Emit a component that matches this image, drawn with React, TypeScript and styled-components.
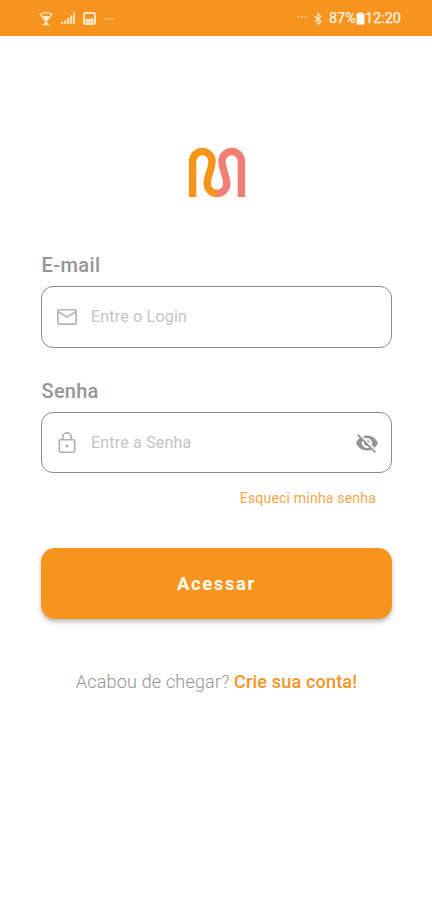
import React from "react";
import styled, { createGlobalStyle } from "styled-components";

const ORANGE = "#f7941e";

const GlobalStyle = createGlobalStyle`
  * { box-sizing: border-box; }
  body { margin: 0; background: #fefefe; font-family: Roboto, "Liberation Sans", sans-serif; }
`;

const Screen = styled.div`
  display: flex;
  flex-direction: column;
  width: 432px;
  height: 900px;
  overflow: hidden;
  background: #fefefe;
`;

const StatusBar = styled.header`
  display: flex;
  justify-content: space-between;
  align-items: center;
  height: 36px;
  flex: none;
  padding: 1px 31px 0 39px;
  background: ${ORANGE};
  color: #ffe9c9;
`;

const StatusGroup = styled.div<{ $gap: number }>`
  display: flex;
  align-items: center;
  gap: ${(p) => p.$gap}px;
`;

const StatusText = styled.span`
  padding-top: 1px;
  font-size: 14.5px;
  line-height: 18px;
  font-weight: 400;
  color: #fff3e0;
  -webkit-text-stroke: 0.25px #fff3e0;
`;

const Clock = styled.div`
  display: flex;
  align-items: center;
`;

const Logo = styled.svg`
  display: block;
  margin: 111px 0 0 188px;
  flex: none;
`;

const Form = styled.form`
  display: flex;
  flex-direction: column;
  width: 351px;
  margin: 55px 0 0 41px;
`;

const Label = styled.label<{ $top?: number; $spacing: number }>`
  margin-top: ${(p) => p.$top ?? 0}px;
  padding-left: 0.6px;
  height: 33px;
  line-height: 24px;
  font-size: 20px;
  font-weight: 500;
  letter-spacing: ${(p) => p.$spacing}px;
  color: #959595;
`;

const Field = styled.div<{ $height: number }>`
  display: flex;
  align-items: center;
  height: ${(p) => p.$height}px;
  padding: 0 12px 0 13px;
  border: 1px solid #8a8a8a;
  border-radius: 12px;
`;

const Input = styled.input<{ $spacing: number }>`
  flex: 1;
  min-width: 0;
  margin-left: 12px;
  padding: 0;
  border: 0;
  outline: 0;
  background: none;
  font: 400 16px/22px Roboto, "Liberation Sans", sans-serif;
  letter-spacing: ${(p) => p.$spacing}px;
  color: #777;
  &::placeholder { color: #c4c4c4; opacity: 1; }
`;

const Forgot = styled.a`
  align-self: flex-end;
  margin: 15px 16px 0 0;
  font-size: 14px;
  line-height: 20px;
  letter-spacing: 0.2px;
  color: #f3a64c;
`;

const Submit = styled.button`
  height: 71px;
  margin-top: 40px;
  padding: 1px 0 0;
  border: 0;
  border-radius: 14px;
  background: ${ORANGE};
  box-shadow: 0 3px 4px rgba(0, 0, 0, 0.26);
  color: #fffaf0;
  font: 700 18.5px/24px Roboto, "Liberation Sans", sans-serif;
  letter-spacing: 1.6px;
`;

const SignUp = styled.p`
  margin: 51px 0 0;
  text-align: center;
  white-space: nowrap;
  font-size: 18px;
  line-height: 24px;
  font-weight: 300;
  letter-spacing: 0.18px;
  color: #949494;
`;

const SignUpLink = styled.a`
  font-weight: 500;
  color: ${ORANGE};
`;

const WifiIcon = () => (
  <svg width="14" height="14" viewBox="0 0 14 14" fill="none" stroke="currentColor">
    <path d="M1.2 2.2Q7-.8 12.8 2.2L8.2 8.2H5.8Z" strokeWidth="1.3" />
    <path d="M3.6 4.6Q7 3 10.4 4.6L7 9Z" fill="currentColor" stroke="none" />
    <path d="M7 8v4" strokeWidth="1.6" />
    <path d="M3 13.2 7 9.6l4 3.6z" fill="currentColor" stroke="none" />
  </svg>
);

const SignalIcon = () => (
  <svg width="14" height="13" viewBox="0 0 14 13" fill="currentColor" opacity=".85">
    <path d="M0 10h2.3v2H0zM3 8.5h2.3V12H3zM6 6h2.3v6H6zM9 3.5h2.3V12H9zM12 .5h2V12h-2z" />
  </svg>
);

const PictureIcon = () => (
  <svg width="13" height="13" viewBox="0 0 13 13">
    <rect x="1" y="1" width="11" height="11" rx="1.5" fill="none" stroke="currentColor" strokeWidth="1.9" />
    <path d="M2.5 10.5V7.8l2-1.6 2 1.4L8.8 5.6l1.8 2.2v2.7z" fill="currentColor" />
  </svg>
);

const DotsIcon = () => (
  <svg width="10" height="4" viewBox="0 0 10 4" fill="currentColor" opacity=".65">
    <path d="M.5 1h2v1.6h-2zM4 1h2v1.6H4zM7.5 1h2v1.6h-2z" />
  </svg>
);

const TopDots = styled.div`
  display: flex;
  padding-bottom: 4px;
`;

const BluetoothIcon = () => (
  <svg width="10" height="14" viewBox="0 0 10 14" fill="none" stroke="currentColor" strokeWidth="1.2">
    <path d="M1.5 4 8 9.5 5 12.5v-11l3 3L1.5 10" />
  </svg>
);

const BatteryIcon = () => (
  <svg width="9" height="13" viewBox="0 0 9 13" fill="#fff">
    <path d="M3 .5h3V1.5h2.4v11H.6v-11H3z" />
  </svg>
);

const MailIcon = () => (
  <svg width="24" height="24" viewBox="0 0 24 24" fill="#b5b5b5">
    <path d="M22 6c0-1.1-.9-2-2-2H4c-1.1 0-2 .9-2 2v12c0 1.1.9 2 2 2h16c1.1 0 2-.9 2-2V6zm-1.7 0L12 11.2 3.7 6v-.4h16.6zm0 12.3H3.7V8L12 13l8.3-5z" />
  </svg>
);

const LockIcon = () => (
  <svg width="24" height="24" viewBox="0 0 24 24" fill="none" stroke="#b0b0b0" strokeWidth="1.6">
    <rect x="4.3" y="8.8" width="15.4" height="12.4" rx="1.5" />
    <path d="M7.8 8.8V6a4.2 4.2 0 0 1 8.4 0v2.8" />
    <circle cx="12" cy="15" r="1.6" fill="#b0b0b0" stroke="none" />
  </svg>
);

const EyeOffIcon = () => (
  <svg width="24" height="24" viewBox="0 0 24 24" fill="#939393">
    <path d="M12 7c2.76 0 5 2.24 5 5 0 .65-.13 1.26-.36 1.83l2.92 2.92c1.51-1.26 2.7-2.89 3.43-4.75-1.73-4.39-6-7.5-11-7.5-1.4 0-2.74.25-3.98.7l2.16 2.16C10.74 7.13 11.35 7 12 7zM2 4.27l2.28 2.28.46.46C3.08 8.3 1.78 10.02 1 12c1.73 4.39 6 7.5 11 7.5 1.55 0 3.03-.3 4.38-.84l.42.42L19.73 22 21 20.73 3.27 3 2 4.27zM7.53 9.8l1.55 1.55c-.05.21-.08.43-.08.65 0 1.66 1.34 3 3 3 .22 0 .44-.03.65-.08l1.55 1.55c-.67.33-1.41.53-2.2.53-2.76 0-5-2.24-5-5 0-.79.2-1.53.53-2.2zm4.31-.78 3.15 3.15.02-.16c0-1.66-1.34-3-3-3l-.17.01z" />
  </svg>
);

export default function App() {
  return (
    <Screen>
      <GlobalStyle />
      <StatusBar>
        <StatusGroup $gap={8}>
          <WifiIcon />
          <SignalIcon />
          <PictureIcon />
          <DotsIcon />
        </StatusGroup>
        <StatusGroup $gap={6}>
          <TopDots><DotsIcon /></TopDots>
          <BluetoothIcon />
          <Clock>
            <StatusText>87%</StatusText>
            <BatteryIcon />
            <StatusText>12:20</StatusText>
          </Clock>
        </StatusGroup>
      </StatusBar>
      <Logo width="58" height="51" viewBox="188 147 58 51" fill="none" strokeWidth="7.4">
        <path d="M192.6 197V161.2A9.7 9.7 0 0 1 212 161.2C212 169 207.2 176 207.2 183.6A9.8 9.8 0 0 0 217 193.4" stroke="#f7941a" />
        <path d="M217 193.4A9.8 9.8 0 0 0 226.8 183.6C226.8 176 222 169 222 161.2A9.7 9.7 0 0 1 241.4 161.2V197" stroke="#f17f73" />
      </Logo>
      <Form>
        <Label htmlFor="email" $spacing={0.4}>E-mail</Label>
        <Field $height={62}>
          <MailIcon />
          <Input id="email" placeholder="Entre o Login" $spacing={0.2} />
        </Field>
        <Label htmlFor="password" $top={31} $spacing={0.2}>Senha</Label>
        <Field $height={61}>
          <LockIcon />
          <Input id="password" type="password" placeholder="Entre a Senha" $spacing={0.2} />
          <EyeOffIcon />
        </Field>
        <Forgot>Esqueci minha senha</Forgot>
        <Submit type="button">Acessar</Submit>
        <SignUp>
          Acabou de chegar? <SignUpLink>Crie sua conta!</SignUpLink>
        </SignUp>
      </Form>
    </Screen>
  );
}
